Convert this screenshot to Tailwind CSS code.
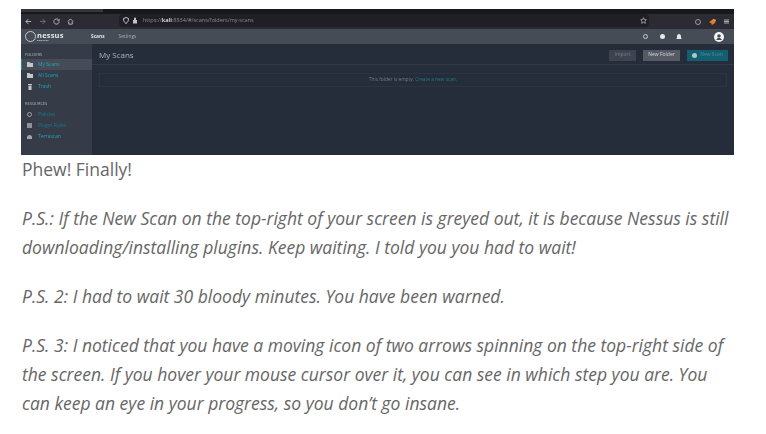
<!DOCTYPE html>
<html lang="en">
<head>
  <meta charset="UTF-8" />
  <title>Nessus</title>
  <script src="https://cdn.jsdelivr.net/npm/@tailwindcss/browser@4"></script>
</head>
<body class="bg-white font-['Open_Sans',sans-serif] overflow-hidden">
<div class="pt-[9px] pl-[21px] w-[766px] h-[434px]">
  <!-- blurry screenshot of the browser -->
  <div class="w-[713px] h-[146px] flex flex-col overflow-hidden bg-[#252d3b] blur-[0.6px]">
    <div class="h-[5px] bg-[#17181c] shrink-0"><div class="w-[82px] h-[3px] bg-[#34363c]"></div></div>
    <div class="h-[15px] shrink-0 bg-[#2b2c33] flex items-start text-[#c4c5c9]">
      <div class="w-[98px] h-[15px] pl-[4px] flex items-center gap-[7px] shrink-0">
        <svg width="7" height="7" viewBox="0 0 8 8" fill="none" stroke="currentColor"><path d="M7 4H1M4 1 1 4l3 3"/></svg>
        <svg width="7" height="7" viewBox="0 0 8 8" fill="none" stroke="#777"><path d="M1 4h6M4 1l3 3-3 3"/></svg>
        <svg width="7" height="7" viewBox="0 0 8 8" fill="none" stroke="currentColor"><path d="M7 4a3 3 0 1 1-1-2.200M7 1v2H5"/></svg>
        <svg width="7" height="7" viewBox="0 0 8 8" fill="none" stroke="currentColor"><path d="M1 4l3-3 3 3M2 4v3h4V4"/></svg>
      </div>
      <div class="flex-1 max-w-[530px] h-[13px] bg-[#1f2026] flex items-center pl-[4px] gap-[3px] rounded-sm">
        <svg width="6" height="7" viewBox="0 0 6 7" fill="none" stroke="currentColor"><path d="M3 .5 5.500 1.500C5.500 4 4.500 5.500 3 6.500 1.500 5.500.5 4 .5 1.500Z"/></svg>
        <svg width="6" height="7" viewBox="0 0 6 7" fill="currentColor"><path d="M1 3h4v3.500H1zM2 3V1.500a1 1 0 0 1 2 0V3" /></svg>
        <span class="text-[5.500px] leading-none text-[#8b8c92] ml-[2px]">https://<b class="text-[#d4d4d8]">kali</b>:8834/#/scans/folders/my-scans</span>
        <svg class="ml-auto mr-[2px]" width="7" height="7" viewBox="0 0 10 10" fill="none" stroke="currentColor"><path d="M5 1l1.200 2.700 2.800.3-2 2 .6 3L5 7.500 2.400 9 3 6 1 4l2.800-.3z"/></svg>
      </div>
      <div class="ml-auto h-[15px] pr-[5px] flex items-center gap-[8px]">
        <span class="w-[6px] h-[6px] rounded-sm border border-[#9a9ba0]"></span>
        <svg width="7" height="6" viewBox="0 0 7 6"><path d="M0 3 3 1l1-1 3 1-1 3-3 2-1-2z" fill="#e8772e"/><path d="M4 0l3 1-2 1z" fill="#f5b53f"/></svg>
        <svg width="5" height="5" viewBox="0 0 5 5" stroke="#aaa"><path d="M0 1h5M0 2.500h5M0 4h5"/></svg>
      </div>
    </div>
    <div class="h-[15px] shrink-0 bg-[#454c55] flex items-center">
      <div class="w-[70px] shrink-0 pl-[4px] flex items-center gap-[1px]">
        <span class="w-[11px] h-[11px] rounded-full border border-[#c5c8cc]"></span>
        <div class="flex flex-col text-[#e5e7eb]">
          <span class="text-[7.500px] leading-[8px] font-bold tracking-[0.2px]">nessus</span>
          <span class="text-[2.500px] leading-[3px]">Essentials</span>
        </div>
      </div>
      <span class="text-[4.800px] font-bold text-[#e5e7eb]">Scans</span>
      <span class="text-[4.800px] text-[#a9adb3] ml-[14px]">Settings</span>
      <div class="ml-auto flex items-center text-[#e5e7eb]">
        <span class="w-[5px] h-[5px] rounded-full border border-[#c8cacd]"></span>
        <span class="w-[5px] h-[5px] rounded-full bg-[#e5e7eb] ml-[12px]"></span>
        <svg class="ml-[11px]" width="6" height="6" viewBox="0 0 6 6" fill="currentColor"><path d="M3 0c1.300 0 2 1 2 2.300V4l1 1H0l1-1V2.300C1 1 1.700 0 3 0z"/></svg>
        <svg class="ml-[32px] mr-[10px]" width="10" height="10" viewBox="0 0 10 10"><circle cx="5" cy="5" r="5" fill="#f3f4f6"/><circle cx="5" cy="4" r="1.800" fill="#454c55"/><path d="M2.200 8c.4-1.500 1.500-2 2.800-2s2.400.5 2.800 2z" fill="#454c55"/></svg>
      </div>
    </div>
    <div class="flex-1 flex min-h-0">
      <aside class="w-[71px] shrink-0 bg-[#353c47] pt-[8px]">
        <div class="text-[4px] leading-[5px] pl-[4px] text-[#b4b8bd]">FOLDERS</div>
        <div class="mt-[2px] h-[11px] bg-[#454c57] border-l border-[#1b8a9a] flex items-center pl-[5px] gap-[5px] text-[5px] text-[#22a5b4]">
          <svg width="6" height="5" viewBox="0 0 6 5" fill="#c3c7cc"><path d="M0 0h2.500l.7 1H6v4H0z"/></svg>My Scans
        </div>
        <div class="h-[11px] flex items-center pl-[6px] gap-[5px] text-[5px] text-[#22a5b4]">
          <svg width="6" height="5" viewBox="0 0 6 5" fill="#c3c7cc"><path d="M0 0h2.500l.7 1H6v4H0z"/></svg>All Scans
        </div>
        <div class="h-[11px] flex items-center pl-[7px] gap-[6px] text-[5px] text-[#22a5b4]">
          <svg width="4" height="6" viewBox="0 0 4 6" fill="#c3c7cc"><path d="M0 0h4v1H0zM.5 1.500h3V6h-3z"/></svg>Trash
        </div>
        <div class="mt-[9px] text-[4px] leading-[5px] pl-[4px] text-[#b4b8bd]">RESOURCES</div>
        <div class="mt-[3px] h-[11px] flex items-center pl-[6px] gap-[6px] text-[5px] text-[#17798a]">
          <span class="w-[5px] h-[5px] rounded-sm border border-[#a0a5ab]"></span>Policies
        </div>
        <div class="h-[11px] flex items-center pl-[6px] gap-[6px] text-[5px] text-[#17798a]">
          <span class="w-[5px] h-[5px] bg-[#8d929a]"></span>Plugin Rules
        </div>
        <div class="h-[11px] flex items-center pl-[6px] gap-[6px] text-[5px] text-[#22a5b4]">
          <span class="w-[5px] h-[4px] rounded-t-full bg-[#a0a5ab]"></span>Terrascan
        </div>
      </aside>
      <main class="flex-1 min-w-0 flex flex-col">
        <div class="h-[21px] shrink-0 border-b border-[#2f3a48] flex items-center pt-[2px] pl-[7px] pr-[6px]">
          <span class="text-[8px] text-[#aeb3b9]">My Scans</span>
          <div class="ml-auto flex items-center gap-[7px] text-[5px]">
            <span class="w-[27px] h-[11px] flex items-center justify-center bg-[#3d444f] text-[#7b8087]">Import</span>
            <span class="w-[37px] h-[11px] flex items-center justify-center bg-[#555a64] text-[#d4d6da]">New Folder</span>
            <span class="w-[41px] h-[11px] flex items-center justify-center gap-[3px] bg-[#125f70] text-[#4f8d9b]"><span class="w-[5px] h-[5px] rounded-full bg-[#b0c4cb]"></span>New Scan</span>
          </div>
        </div>
        <div class="mt-[8px] mx-[7px] h-[14px] border border-[#2b3542] flex items-center justify-center text-[4.800px] text-[#767d86]">
          <span>This folder is empty. <span class="text-[#1a7f8f]">Create a new scan.</span></span>
        </div>
      </main>
    </div>
  </div>

  <!-- article text -->
  <div class="ml-[1px] w-[712px] text-[#666] text-[17.500px] leading-[29px]">
    <p>Phew! Finally!</p>
    <p class="mt-[20px] italic">P.S.: If the New Scan on the top-right of your screen is greyed out, it is because Nessus is still downloading/installing plugins. Keep waiting. I told you you had to wait!</p>
    <p class="mt-[20px] italic">P.S. 2: I had to wait 30 bloody minutes. You have been warned.</p>
    <p class="mt-[20px] italic">P.S. 3: I noticed that you have a moving icon of two arrows spinning on the top-right side of the screen. If you hover your mouse cursor over it, you can see in which step you are. You can keep an eye in your progress, so you don’t go insane.</p>
  </div>
</div>
</body>
</html>
